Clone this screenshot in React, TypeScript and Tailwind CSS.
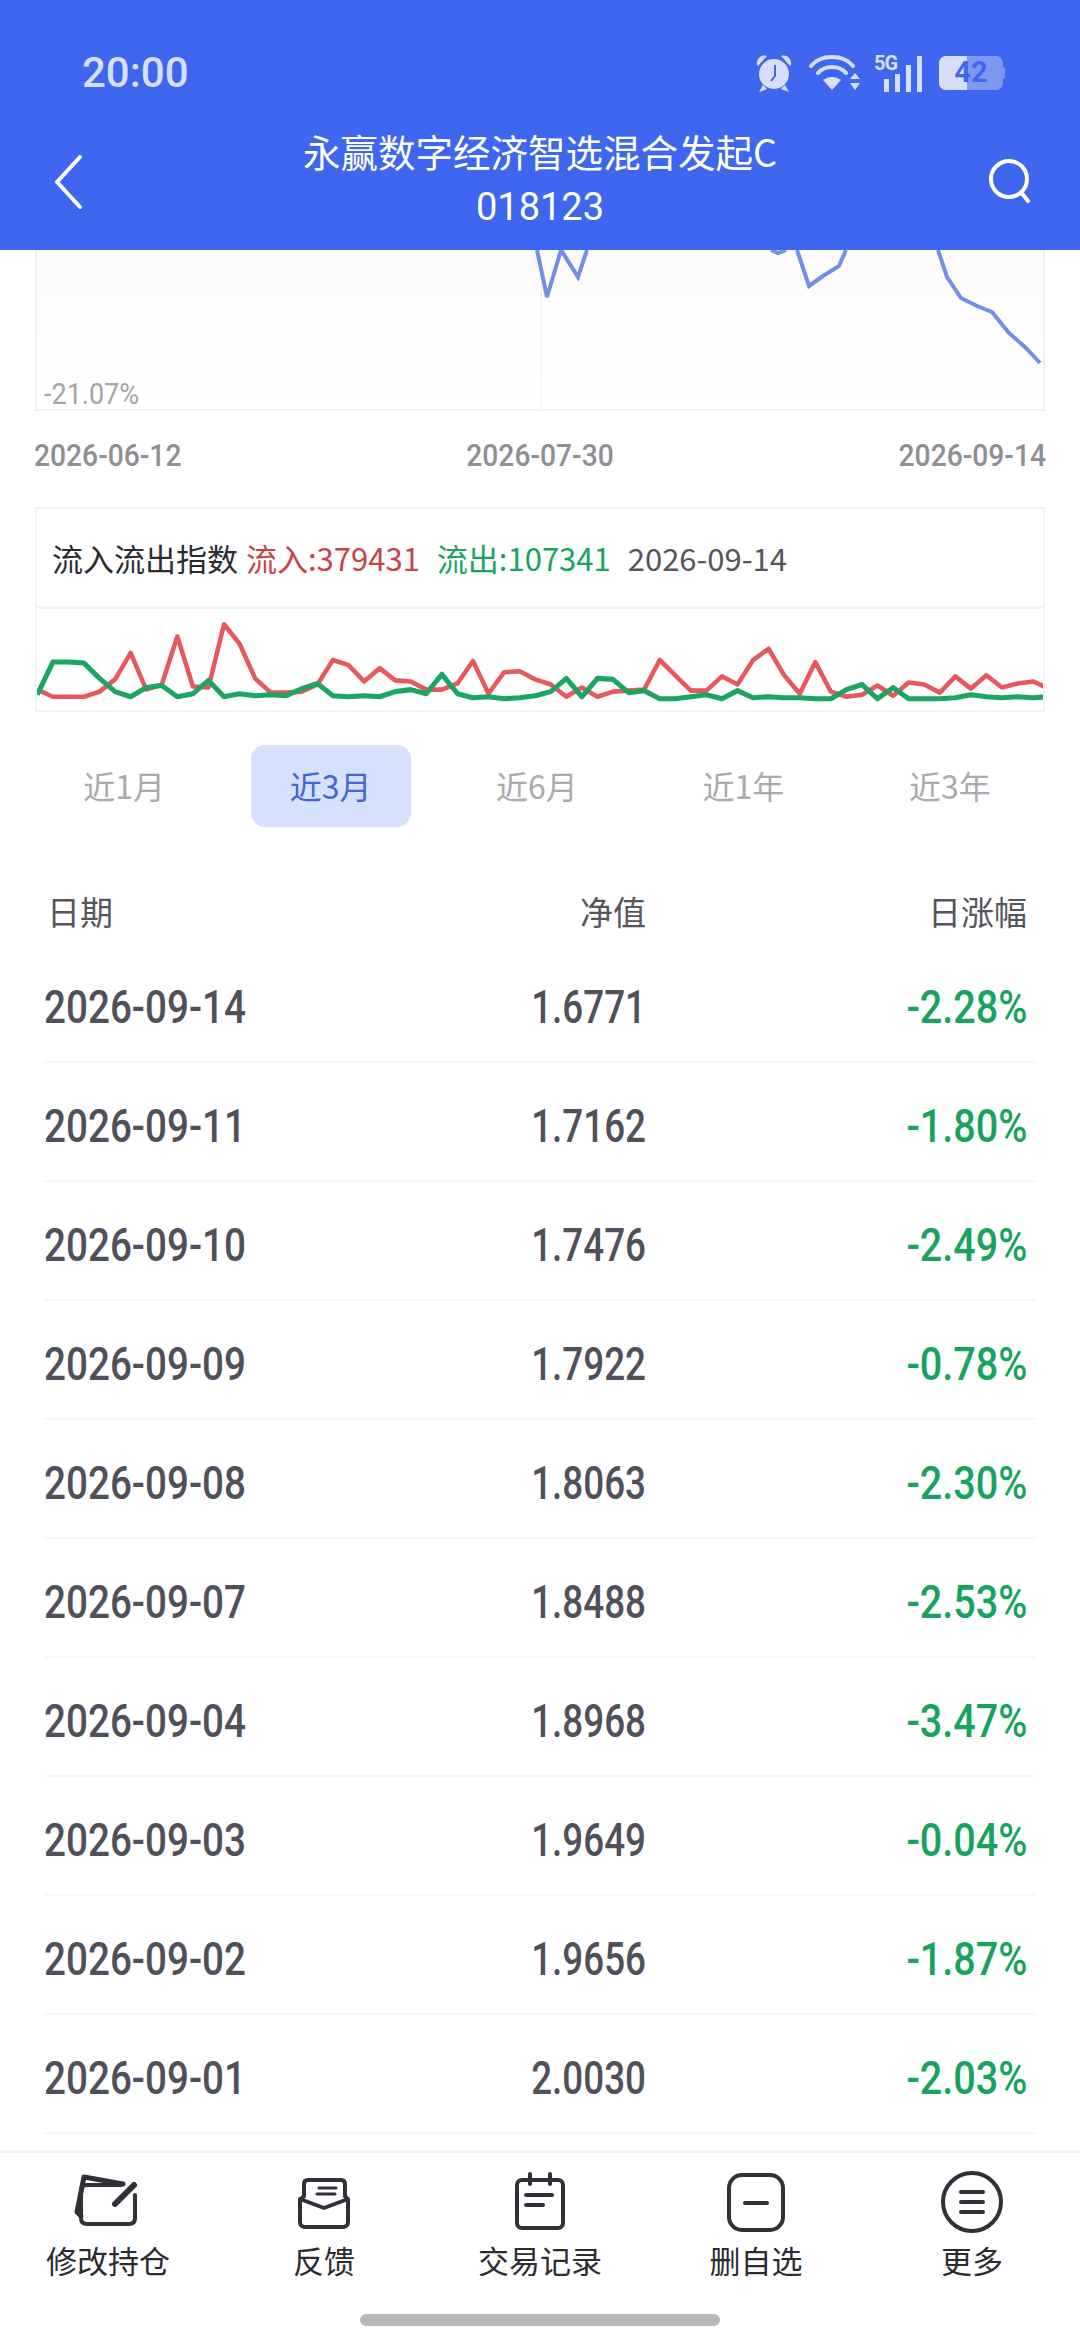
const CJK = "font-['Noto_Sans_CJK_SC','Noto_Sans',sans-serif]";
const NUM = "font-['Roboto',sans-serif]";

const rows = [
  ['2026-09-14', '1.6771', '-2.28%'],
  ['2026-09-11', '1.7162', '-1.80%'],
  ['2026-09-10', '1.7476', '-2.49%'],
  ['2026-09-09', '1.7922', '-0.78%'],
  ['2026-09-08', '1.8063', '-2.30%'],
  ['2026-09-07', '1.8488', '-2.53%'],
  ['2026-09-04', '1.8968', '-3.47%'],
  ['2026-09-03', '1.9649', '-0.04%'],
  ['2026-09-02', '1.9656', '-1.87%'],
  ['2026-09-01', '2.0030', '-2.03%'],
];

const tabs = ['近1月', '近3月', '近6月', '近1年', '近3年'];

// y values of the two flow lines, read off the screenshot (one sample every 15.56px)
const redLine = [688, 695, 695, 695, 690, 678, 652, 688, 683, 636, 685, 686, 624, 643, 677, 691, 691, 690, 683, 659, 664, 680, 667, 679, 680, 688, 688, 682, 660, 692, 671, 670, 678, 683, 695, 686, 695, 690, 689, 688, 659, 674, 689, 689, 675, 683, 659, 648, 674, 692, 661, 690, 695, 693, 684, 694, 681, 683, 691, 675, 687, 674, 686, 682, 680, 687];
const greenLine = [693, 661, 661, 662, 677, 690, 695, 686, 684, 695, 692, 679, 695, 692, 694, 693, 694, 687, 682, 694, 695, 694, 695, 690, 688, 692, 673, 692, 696, 695, 697, 696, 694, 690, 677, 695, 677, 678, 691, 689, 697, 697, 695, 693, 697, 689, 696, 695, 696, 696, 697, 697, 688, 683, 697, 686, 697, 697, 697, 696, 693, 695, 696, 695, 696, 695];

const toPoints = (ys: number[]) => ys.map((y, i) => `${37.3 + 15.56 * i},${y}`).join(' ');

function StatusBar() {
  return (
    <div className="h-[104px] flex items-start justify-between pl-[82px] pr-[75px] pt-[50px]">
      <span className={`${NUM} font-medium text-[42px] leading-[46px] text-[#d5dffb]`}>20:00</span>
      <div className="flex items-center h-[46px] text-[#d5dffb]">
        <svg width="38" height="38" viewBox="0 0 38 38" fill="currentColor">
          <path d="M2 11 C1 5 6 0 12 2 L3 12 Z M36 11 C37 5 32 0 26 2 L35 12 Z" />
          <circle cx="19" cy="20" r="15" />
          <path d="M8 31 L4 38 L12 35 Z M30 31 L34 38 L26 35 Z" />
          <path d="M20 11 V22 L16 27" stroke="#3f66ee" strokeWidth="2" fill="none" />
        </svg>
        <svg className="ml-[16px]" width="52" height="36" viewBox="0 0 52 36" fill="none" stroke="currentColor" strokeWidth="4" strokeLinecap="round">
          <path d="M2 11 C12 -1 34 -1 44 11" />
          <path d="M9 18 C16 10 30 10 37 18" />
          <path d="M23 35 L14 25 C19 21 27 21 32 25 Z" fill="currentColor" stroke="none" />
          <path d="M46 18 L51 24 H41 Z M46 35 L51 28 H41 Z" fill="currentColor" stroke="none" />
        </svg>
        <div className="relative ml-[13px] w-[48px] h-[38px]">
          <span className={`absolute left-0 top-[-1px] ${NUM} font-bold text-[20px] leading-[20px] tracking-[-1px]`}>5G</span>
          <div className="absolute bottom-0 right-0 flex items-end gap-[5.5px]">
            <div className="w-[5.5px] h-[13px] bg-[#d5dffb]" />
            <div className="w-[5.5px] h-[18px] bg-[#d5dffb]" />
            <div className="w-[5.5px] h-[27px] bg-[#d5dffb]" />
            <div className="w-[5.5px] h-[36px] bg-[#d5dffb]" />
          </div>
        </div>
        <div className="ml-[17px] flex items-center">
          <div className="relative w-[64px] h-[34px] rounded-[7px] bg-[#7d98f3] overflow-hidden">
            <div className="absolute inset-y-0 left-0 w-[28px] bg-[#d5dffb]" />
            <span className={`absolute inset-0 flex items-center justify-center ${NUM} font-bold text-[29px] text-[#3f66ee]`}>42</span>
          </div>
          <div className="w-[2px] h-[12px] bg-[#7d98f3] rounded-r-[2px]" />
        </div>
      </div>
    </div>
  );
}

function Header() {
  return (
    <header className="absolute top-0 inset-x-0 z-10 h-[250px] bg-[#3f66ee]">
      <StatusBar />
      <div className="relative h-[146px]">
        <div className={`text-center text-white text-[37.5px] leading-[53px] ${CJK} pt-[20px]`}>
          <div>永赢数字经济智选混合发起C</div>
          <div className={`${NUM} text-[38px] mt-[4px]`}>018123</div>
        </div>
        <svg className="absolute left-[54px] top-[50px]" width="30" height="56" viewBox="0 0 30 56" fill="none" stroke="white" strokeWidth="4" strokeLinecap="round" strokeLinejoin="round">
          <path d="M26 3 L3 28 L26 53" />
        </svg>
        <svg className="absolute left-[988px] top-[54px]" width="46" height="46" viewBox="0 0 46 46" fill="none" stroke="white" strokeWidth="4" strokeLinecap="round">
          <circle cx="21" cy="21" r="18" />
          <path d="M33 34 L40 43" />
        </svg>
      </div>
    </header>
  );
}

function NavChart() {
  return (
    <div className="pt-[250px] px-[35px]">
      <div className="relative h-[161px] border-x-2 border-b-2 border-[#f1f1f3] bg-gradient-to-b from-[#fdfbfa] to-white">
        <div className="absolute left-[504px] top-0 bottom-0 w-[1px] bg-[#f1f1f3]" />
        <svg className="absolute inset-0" width="1008" height="161" viewBox="37 250 1008 161" fill="none">
          <path d="M537 250 L547 297 L561 250 L578 277 L587 250" stroke="#6f8fe8" strokeWidth="4" />
          <path d="M771 250 L778 253 L786 250" stroke="#6f8fe8" strokeWidth="4" />
          <path d="M797 250 L809 286 L823 276 L839 266 L846 250" stroke="#6f8fe8" strokeWidth="4" />
          <path d="M938 250 L947 277 L961 298 L977 306 L992 312 L1009 333 L1026 348 L1040 363" stroke="#6f8fe8" strokeWidth="4" strokeLinejoin="round" />
        </svg>
        <span className={`absolute left-[7px] bottom-[-2px] origin-left scale-x-[0.9] ${NUM} text-[30px] leading-[34px] text-[#a3a3a8]`}>-21.07%</span>
      </div>
      <div className={`flex justify-between mt-[28px] ${NUM} font-medium text-[31px] leading-[34px] text-[#8e8e93] -mx-[1px]`}>
        <span className="origin-left scale-x-[0.91]">2026-06-12</span>
        <span className="origin-center scale-x-[0.91]">2026-07-30</span>
        <span className="origin-right scale-x-[0.91]">2026-09-14</span>
      </div>
    </div>
  );
}

function FlowChart() {
  return (
    <div className="mx-[35px] mt-[34px] border-2 border-[#f4f4f6] h-[205px] flex flex-col">
      <div className={`h-[100px] shrink-0 flex items-center pl-[15px] border-b-[3px] border-[#f4f4f6] text-[31px] leading-none ${CJK}`}>
        <span className="text-[#2b2b30]">流入流出指数</span>
        <span className="ml-[8px] text-[#c7424a]">流入:379431</span>
        <span className="ml-[17px] text-[#17a35f]">流出:107341</span>
        <span className="ml-[17px] text-[#55555c]">2026-09-14</span>
      </div>
      <svg className="flex-1 w-full" viewBox="37 609 1006 99" preserveAspectRatio="none" fill="none">
        <polyline points={toPoints(redLine)} stroke="#e8575c" strokeWidth="4.5" strokeLinejoin="round" />
        <polyline points={toPoints(greenLine)} stroke="#1ca562" strokeWidth="5" strokeLinejoin="round" />
      </svg>
    </div>
  );
}

function Tabs() {
  return (
    <div className="grid grid-cols-5 mt-[33px] pl-[21px] pr-[27px]">
      {tabs.map((t, i) => (
        <div key={t} className="flex justify-center">
          <div className={`w-[160px] h-[82px] pb-[3px] rounded-[14px] flex items-center justify-center text-[32px] ${CJK} ${i === 1 ? 'bg-[#d6e2fb] text-[#4564d6]' : 'text-[#a9a9ae]'}`}>
            {t}
          </div>
        </div>
      ))}
    </div>
  );
}

function Table() {
  return (
    <div className="px-[44px] mt-[55px]">
      <div className={`grid grid-cols-[402px_200px_1fr] items-center h-[60px] mb-[2px] text-[#55555c] text-[33px] ${CJK}`}>
        <span className="pl-[3px]">日期</span>
        <span className="text-right">净值</span>
        <span className="text-right pr-[9px]">日涨幅</span>
      </div>
      {rows.map((r) => (
        <div key={r[0]} className={`grid grid-cols-[402px_200px_1fr] items-center h-[119px] pt-[10px] border-b-2 border-[#f7f7f8] text-[46px] font-medium ${NUM} text-[#50505a]`}>
          <span className="origin-left scale-x-[0.84]">{r[0]}</span>
          <span className="text-right origin-right scale-x-[0.8]">{r[1]}</span>
          <span className="text-right pr-[10px] origin-right scale-x-[0.86] text-[#17a35f]">{r[2]}</span>
        </div>
      ))}
    </div>
  );
}

function BottomBar() {
  const items = [
    {
      label: '修改持仓',
      icon: (
        <svg className="overflow-visible" width="64" height="64" viewBox="0 0 64 64" fill="none" stroke="#2f3138" strokeWidth="4" strokeLinejoin="round" strokeLinecap="round">
          <path d="M8 7 L47 14 M8 7 L1 42 L5 46" strokeWidth="5" />
          <path d="M45 15 H11 C7 15 5 17 5 20 V48 C5 52 7 54 11 54 H53 C57 54 59 52 59 48 V25" />
          <path d="M39 34 L58 15" strokeWidth="6" />
        </svg>
      ),
    },
    {
      label: '反馈',
      icon: (
        <svg width="64" height="64" viewBox="0 0 64 64" fill="none" stroke="#2f3138" strokeWidth="4" strokeLinejoin="round" strokeLinecap="round">
          <path d="M12 26 V14 C12 11 14 10 16 10 H49 C51 10 53 11 53 14 V26" />
          <path d="M12 26 L8 30 V52 C8 55 10 57 13 57 H51 C54 57 56 55 56 52 V30 L53 26 M8 29 L32 38 L56 29" />
          <path d="M27 18 H44 M25 24 H43" strokeWidth="3" />
        </svg>
      ),
    },
    {
      label: '交易记录',
      icon: (
        <svg width="64" height="64" viewBox="0 0 64 64" fill="none" stroke="#2f3138" strokeWidth="4" strokeLinejoin="round" strokeLinecap="round">
          <rect x="9" y="10" width="46" height="48" rx="5" />
          <path d="M22 4 V14 M42 4 V14" />
          <path d="M18 25 H44 M18 35 H35" />
        </svg>
      ),
    },
    {
      label: '删自选',
      icon: (
        <svg width="64" height="64" viewBox="0 0 64 64" fill="none" stroke="#2f3138" strokeWidth="4" strokeLinecap="round">
          <rect x="5" y="5" width="54" height="55" rx="13" />
          <path d="M21 33 H43" />
        </svg>
      ),
    },
    {
      label: '更多',
      icon: (
        <svg width="64" height="64" viewBox="0 0 64 64" fill="none" stroke="#2f3138" strokeWidth="4" strokeLinecap="round">
          <circle cx="32" cy="32" r="29" />
          <path d="M21 22 H43 M21 32 H43 M21 42 H43" />
        </svg>
      ),
    },
  ];
  return (
    <div className="absolute bottom-0 inset-x-0 h-[194px] bg-white border-t-[3px] border-[#f4f4f6]">
      <div className="grid grid-cols-5 pt-[17px]">
        {items.map((it) => (
          <div key={it.label} className="flex flex-col items-center">
            {it.icon}
            <span className={`mt-[6px] text-[31px] leading-[40px] text-[#2b2b30] ${CJK}`}>{it.label}</span>
          </div>
        ))}
      </div>
      <div className="absolute left-[360px] bottom-[18px] w-[360px] h-[12px] rounded-full bg-[#b8b8b8]" />
    </div>
  );
}

export default function App() {
  return (
    <div className="relative w-[1080px] h-[2344px] overflow-hidden bg-white">
      <Header />
      <NavChart />
      <FlowChart />
      <Tabs />
      <Table />
      <BottomBar />
    </div>
  );
}
